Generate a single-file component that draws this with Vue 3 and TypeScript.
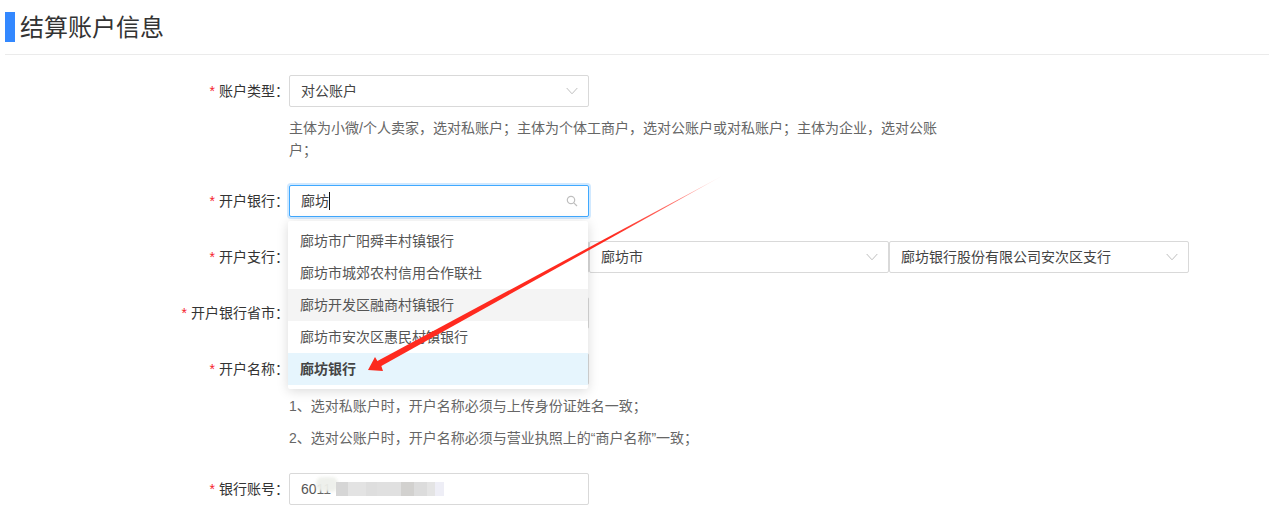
<script setup lang="ts">
const banks: string[] = [
  '廊坊市广阳舜丰村镇银行',
  '廊坊市城郊农村信用合作联社',
  '廊坊开发区融商村镇银行',
  '廊坊市安次区惠民村镇银行',
  '廊坊银行',
]
</script>

<template>
  <div class="page">
    <h2 class="title"><i class="bar"></i><span class="title-text">结算账户信息</span></h2>
    <div class="form">
      <div class="row">
        <label class="label"><em>*</em>账户类型：</label>
        <div class="control">
          <div class="select"><span>对公账户</span><svg class="chev" viewBox="0 0 12 8"><path d="M.7 1 6 6.8 11.3 1" /></svg></div>
          <p class="help wide">主体为小微/个人卖家，选对私账户；主体为个体工商户，选对公账户或对私账户；主体为企业，选对公账户；</p>
        </div>
      </div>

      <div class="row">
        <label class="label"><em>*</em>开户银行：</label>
        <div class="control">
          <div class="select focus">
            <span class="typed">廊坊<b class="caret"></b></span>
            <svg class="search" viewBox="0 0 12 12"><circle cx="5" cy="5" r="3.7" /><path d="M7.8 7.8 11 11" /></svg>
          </div>
          <ul class="menu">
            <li v-for="(b, i) in banks" :key="b" :class="{ hover: i === 2, active: i === 4 }">{{ b }}</li>
          </ul>
        </div>
      </div>

      <div class="row">
        <label class="label"><em>*</em>开户支行：</label>
        <div class="control triple">
          <div class="select"><span>河北省</span></div>
          <div class="select"><span>廊坊市</span><svg class="chev" viewBox="0 0 12 8"><path d="M.7 1 6 6.8 11.3 1" /></svg></div>
          <div class="select"><span>廊坊银行股份有限公司安次区支行</span><svg class="chev" viewBox="0 0 12 8"><path d="M.7 1 6 6.8 11.3 1" /></svg></div>
        </div>
      </div>

      <div class="row">
        <label class="label"><em>*</em>开户银行省市：</label>
        <div class="control"><div class="select"></div></div>
      </div>

      <div class="row">
        <label class="label"><em>*</em>开户名称：</label>
        <div class="control">
          <div class="select"></div>
          <p class="help">1、选对私账户时，开户名称必须与上传身份证姓名一致；</p>
          <p class="help">2、选对公账户时，开户名称必须与营业执照上的“商户名称”一致；</p>
        </div>
      </div>

      <div class="row">
        <label class="label"><em>*</em>银行账号：</label>
        <div class="control">
          <div class="select account">
            <span>6011</span>
            <i class="blob"></i>
            <i class="smear"></i>
          </div>
        </div>
      </div>
    </div>

    <svg class="arrow" width="1269" height="524" viewBox="0 0 1269 524">
      <defs>
        <linearGradient id="tail" gradientUnits="userSpaceOnUse" x1="722" y1="176" x2="610" y2="237">
          <stop offset="0" stop-color="#ff2a1f" stop-opacity="0.08" />
          <stop offset="0.4" stop-color="#ff2a1f" stop-opacity="0.65" />
          <stop offset="1" stop-color="#ff2a1f" />
        </linearGradient>
      </defs>
      <polygon fill="url(#tail)" points="722,176 379.5,367 376.5,361.5" />
      <polygon fill="#fb2a1e" points="368,370 375,357 378,362 381,365 383,371" />
    </svg>
  </div>
</template>

<style>
html, body { margin: 0; background: #fff; overflow: hidden; }
</style>

<style scoped>
.page {
  position: relative;
  width: 1269px;
  height: 524px;
  overflow: hidden;
  font-family: "Liberation Sans", "Noto Sans CJK SC", sans-serif;
  font-size: 14px;
  color: #333;
  background: #fff;
}
.title {
  display: flex;
  align-items: center;
  gap: 5px;
  height: 30px;
  margin: 0 0 0 5px;
  padding: 12px 0;
  border-bottom: 1px solid #ebebeb;
  font-size: 24px;
  font-weight: 400;
  color: #333;
}
.title-text { margin-bottom: 4px; }
.bar { width: 10px; height: 30px; background: #3388ff; }
.form { padding-top: 20px; }
.row { display: flex; align-items: flex-start; margin-bottom: 24px; }
.label {
  width: 289px;
  flex: none;
  height: 32px;
  line-height: 32px;
  text-align: right;
  color: #333;
}
.label em {
  font-style: normal;
  color: #f5222d;
  margin-right: 4px;
}
.control { position: relative; width: 300px; flex: none; }
.triple { display: flex; width: 900px; }
.triple .select { width: 300px; }
.select {
  position: relative;
  box-sizing: border-box;
  width: 300px;
  height: 32px;
  padding: 0 11px;
  line-height: 30px;
  border: 1px solid #d9d9d9;
  border-radius: 2px;
  background: #fff;
  color: #444;
}
.focus { border-color: #40a9ff; box-shadow: 0 0 0 2px rgba(24, 144, 255, 0.2); }
.typed { display: inline-flex; align-items: center; height: 30px; }
.caret { display: inline-block; width: 1px; height: 18px; background: #111; }
.chev {
  position: absolute;
  right: 10px;
  top: 11px;
  width: 12px;
  height: 8px;
  fill: none;
  stroke: #bfbfbf;
  stroke-width: 1;
}
.search {
  position: absolute;
  right: 10px;
  top: 9px;
  width: 12px;
  height: 12px;
  fill: none;
  stroke: #bfbfbf;
  stroke-width: 1.2;
}
.help {
  margin: 10px 0 0;
  line-height: 22px;
  color: #666;
  white-space: nowrap;
}
.wide { width: 650px; white-space: normal; }
.menu {
  position: absolute;
  z-index: 2;
  top: 36px;
  left: -1px;
  width: 300px;
  margin: 0;
  padding: 4px 0;
  list-style: none;
  background: #fff;
  border-radius: 2px;
  box-shadow: 0 2px 12px rgba(0, 0, 0, 0.15);
}
.menu li {
  height: 32px;
  line-height: 32px;
  padding: 0 12px;
  color: #555;
}
.menu li.hover { background: #f4f4f4; }
.menu li.active { background: #e6f5fd; font-weight: 700; color: #444; }
.account span { color: #555; }
.blob {
  position: absolute;
  left: 26px;
  top: 3px;
  width: 22px;
  height: 15px;
  border-radius: 6px;
  background: #eef0eb;
  opacity: 0.95;
  filter: blur(1.5px);
}
.smear {
  position: absolute;
  left: 46px;
  top: 8px;
  width: 108px;
  height: 14px;
  background: linear-gradient(90deg, #d6d6d6 0 11%, #e3e3e3 11% 28%, #dedede 28% 38%, #e0e0e0 38% 60%, #d2d1cf 60% 72%, #dcdcdc 72% 84%, #e4e4e4 84% 92%, #eeeef6 92% 100%);
}
.arrow { position: absolute; left: 0; top: 0; z-index: 3; pointer-events: none; }
</style>
